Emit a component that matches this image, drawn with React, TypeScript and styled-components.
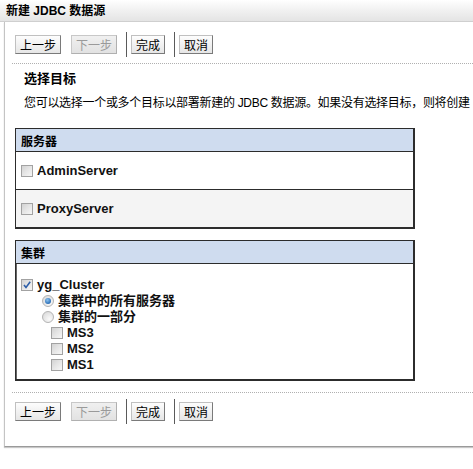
import React from "react";
import styled, { createGlobalStyle } from "styled-components";

const Global = createGlobalStyle`
  html, body { margin: 0; padding: 0; background: #fff; }
  body {
    font-family: "Liberation Sans", "Noto Sans CJK SC", sans-serif;
    font-size: 12px;
    color: #000;
    overflow: hidden;
    width: 473px;
    height: 469px;
  }
`;

const TitleBar = styled.div`
  height: 21px;
  line-height: 22px;
  padding-left: 6px;
  font-weight: bold;
  font-size: 12px;
  background: linear-gradient(#ffffff 0%, #f2f2f2 45%, #e4e4e4 100%);
  border-bottom: 1px solid #cfcfcf;
  white-space: nowrap;
`;

const Panel = styled.div`
  margin-left: 4px;
  height: 425px;
  border-left: 1px solid #c4c4c4;
  border-bottom: 1px solid #9a9a9a;
  box-shadow: 0 1px 1px #c8c8c8;
  padding-left: 7px;
  box-sizing: border-box;
  overflow: hidden;
`;

const Toolbar = styled.div<{ $top: number; $divider: "top" | "bottom" }>`
  display: flex;
  align-items: center;
  height: 25px;
  margin-top: ${(p) => p.$top}px;
  padding-left: 3px;
  ${(p) =>
    p.$divider === "bottom"
      ? "padding-bottom: 6px; border-bottom: 1px dotted #b0b0b0;"
      : "padding-top: 6px; border-top: 1px dotted #b0b0b0;"}
`;

const Btn = styled.button<{ $disabled?: boolean; $ml?: number }>`
  font-family: "Noto Sans CJK SC", sans-serif;
  font-size: 12px;
  height: 19px;
  line-height: 15px;
  padding: 0 4px;
  margin: 0 0 0 ${(p) => p.$ml ?? 0}px;
  color: ${(p) => (p.$disabled ? "#9a9a9a" : "#000")};
  background: ${(p) =>
    p.$disabled
      ? "linear-gradient(#f0f0f0, #e2e2e2)"
      : "linear-gradient(#fdfdfd, #e6e6e6)"};
  border: 1px solid;
  border-color: ${(p) =>
    p.$disabled ? "#c8c8c8 #b0b0b0 #b0b0b0 #c8c8c8" : "#c0c0c0 #7a7a7a #7a7a7a #c0c0c0"};
  border-radius: 0;
  cursor: default;
`;

const Sep = styled.span<{ $ml: number }>`
  display: block;
  width: 1px;
  height: 25px;
  background: #5a5a5a;
  margin-left: ${(p) => p.$ml}px;
`;

const Heading = styled.div`
  font-family: "Noto Sans CJK SC", sans-serif;
  font-weight: bold;
  font-size: 13px;
  line-height: 16px;
  margin: 6px 0 0 12px;
`;

const Desc = styled.div`
  font-family: "Liberation Sans", "Noto Sans CJK SC", sans-serif;
  font-size: 12px;
  letter-spacing: -0.3px;
  line-height: 16px;
  margin: 9px 0 0 12px;
  white-space: nowrap;
`;

const Box = styled.div<{ $top: number }>`
  margin: ${(p) => p.$top}px 0 0 3px;
  width: 400px;
  box-sizing: border-box;
  border: 2px solid #2c2c2c;
  border-top-width: 1px;
  border-left-width: 1px;
  box-shadow: inset 1px 1px 0 #666;
`;

const BoxHeader = styled.div`
  height: 22px;
  line-height: 23px;
  padding-left: 5px;
  background: #cfdcef;
  border-bottom: 1px solid #2c2c2c;
  font-family: "Noto Sans CJK SC", sans-serif;
  font-weight: bold;
  font-size: 12px;
`;

const ServerRow = styled.div<{ $alt?: boolean; $h: number }>`
  display: flex;
  align-items: center;
  height: ${(p) => p.$h}px;
  padding-left: 5px;
  background: ${(p) => (p.$alt ? "#f4f4f4" : "#fff")};
  & + & {
    border-top: 1px solid #2c2c2c;
  }
`;

const Label = styled.span`
  font-family: "Liberation Sans", "Noto Sans CJK SC", sans-serif;
  font-weight: bold;
  font-size: 13px;
  color: #111;
  margin-left: 4px;
  line-height: 16px;
`;

const Check = styled.span`
  position: relative;
  display: inline-block;
  width: 12px;
  height: 12px;
  box-sizing: border-box;
  border: 1px solid #a2a2a2;
  background: linear-gradient(135deg, #d2d2d2 0%, #e6e6e6 50%, #f6f6f6 100%);
  flex: none;
`;

const CheckMark = styled.svg`
  position: absolute;
  left: 0;
  top: 0;
`;

const Radio = styled.span<{ $on?: boolean }>`
  position: relative;
  display: inline-block;
  width: 12px;
  height: 12px;
  box-sizing: border-box;
  border-radius: 50%;
  border: 1px solid #b4b4b4;
  background: radial-gradient(circle at 65% 70%, #fafafa 0%, #e4e4e4 60%, #d2d2d2 100%);
  flex: none;
  &::after {
    content: "";
    display: ${(p) => (p.$on ? "block" : "none")};
    position: absolute;
    left: 2px;
    top: 2px;
    width: 6px;
    height: 6px;
    border-radius: 50%;
    background: radial-gradient(circle at 40% 35%, #8fc3ee 0%, #2a6fb8 70%, #1d4f8e 100%);
  }
`;

const ClusterBody = styled.div`
  padding: 13px 0 6px 5px;
`;

const TreeRow = styled.div<{ $indent: number }>`
  display: flex;
  align-items: center;
  height: 16px;
  padding-left: ${(p) => p.$indent}px;
`;

const CheckBox: React.FC<{ checked?: boolean }> = ({ checked }) => (
  <Check>
    {checked && (
      <CheckMark width="10" height="10" viewBox="0 0 10 10">
        <path d="M2 5 L4 7.5 L8.2 1.8" fill="none" stroke="#2d5ea8" strokeWidth="1.6" />
      </CheckMark>
    )}
  </Check>
);

const Buttons: React.FC = () => (
  <>
    <Btn>上一步</Btn>
    <Btn $disabled $ml={10}>下一步</Btn>
    <Sep $ml={9} />
    <Btn $ml={4}>完成</Btn>
    <Sep $ml={9} />
    <Btn $ml={4}>取消</Btn>
  </>
);

export default function App() {
  return (
    <>
      <Global />
      <TitleBar>新建 JDBC 数据源</TitleBar>
      <Panel>
        <Toolbar $top={10} $divider="bottom">
          <Buttons />
        </Toolbar>
        <Heading>选择目标</Heading>
        <Desc>您可以选择一个或多个目标以部署新建的 JDBC 数据源。如果没有选择目标，则将创建</Desc>
        <Box $top={17}>
          <BoxHeader>服务器</BoxHeader>
          <ServerRow $h={37}>
            <CheckBox />
            <Label>AdminServer</Label>
          </ServerRow>
          <ServerRow $h={37} $alt>
            <CheckBox />
            <Label>ProxyServer</Label>
          </ServerRow>
        </Box>
        <Box $top={11}>
          <BoxHeader>集群</BoxHeader>
          <ClusterBody>
            <TreeRow $indent={0}>
              <CheckBox checked />
              <Label>yg_Cluster</Label>
            </TreeRow>
            <TreeRow $indent={21}>
              <Radio $on />
              <Label>集群中的所有服务器</Label>
            </TreeRow>
            <TreeRow $indent={21}>
              <Radio />
              <Label>集群的一部分</Label>
            </TreeRow>
            <TreeRow $indent={30}>
              <CheckBox />
              <Label>MS3</Label>
            </TreeRow>
            <TreeRow $indent={30}>
              <CheckBox />
              <Label>MS2</Label>
            </TreeRow>
            <TreeRow $indent={30}>
              <CheckBox />
              <Label>MS1</Label>
            </TreeRow>
          </ClusterBody>
        </Box>
        <Toolbar $top={11} $divider="top">
          <Buttons />
        </Toolbar>
      </Panel>
    </>
  );
}
